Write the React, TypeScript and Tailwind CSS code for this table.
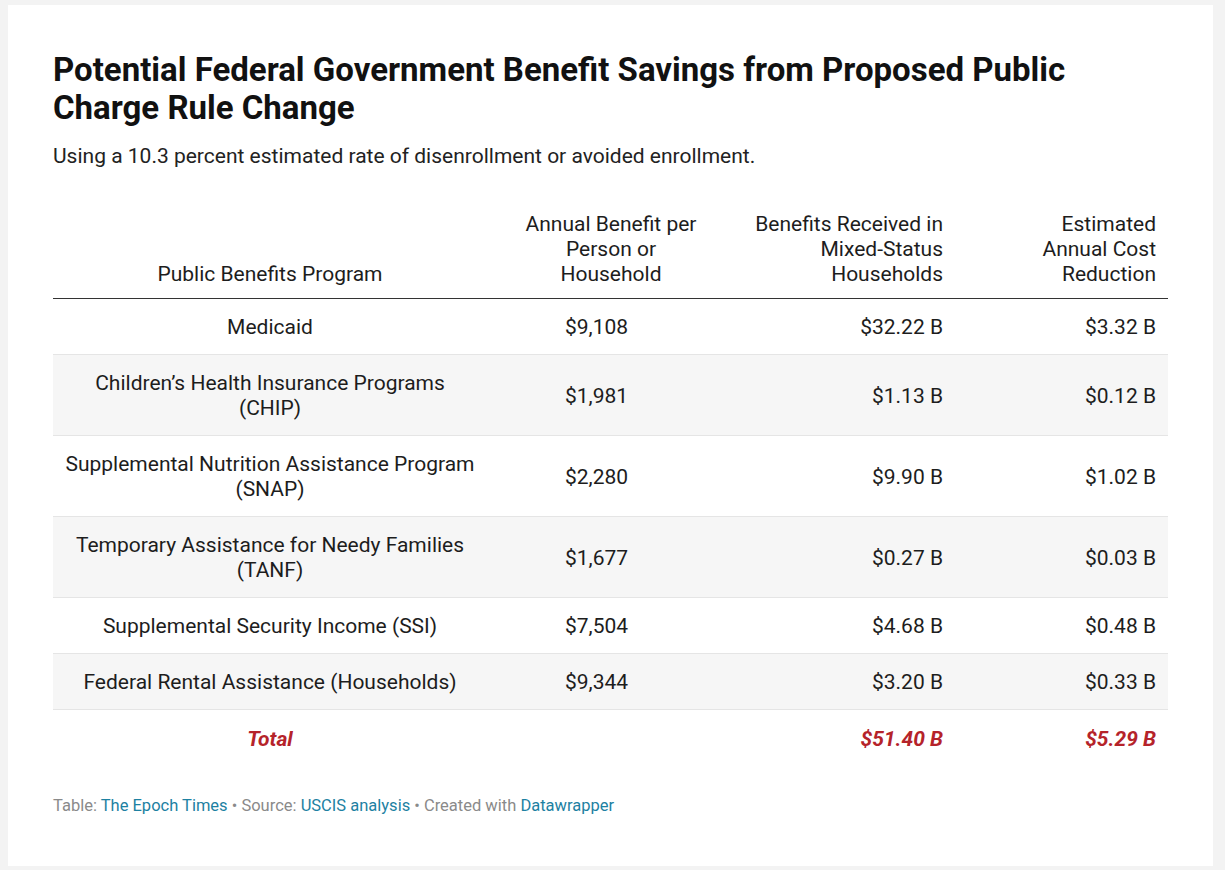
import React from "react";

type Row = { name: React.ReactNode; a: string; b: string; c: string; h: string };

const rows: Row[] = [
  { name: "Medicaid", a: "$9,108", b: "$32.22 B", c: "$3.32 B", h: "h-[56px]" },
  {
    name: (
      <>
        Children’s Health Insurance Programs
        <br />
        (CHIP)
      </>
    ),
    a: "$1,981",
    b: "$1.13 B",
    c: "$0.12 B",
    h: "h-[81px]",
  },
  {
    name: (
      <>
        Supplemental Nutrition Assistance Program
        <br />
        (SNAP)
      </>
    ),
    a: "$2,280",
    b: "$9.90 B",
    c: "$1.02 B",
    h: "h-[81px]",
  },
  {
    name: (
      <>
        Temporary Assistance for Needy Families
        <br />
        (TANF)
      </>
    ),
    a: "$1,677",
    b: "$0.27 B",
    c: "$0.03 B",
    h: "h-[81px]",
  },
  { name: "Supplemental Security Income (SSI)", a: "$7,504", b: "$4.68 B", c: "$0.48 B", h: "h-[56px]" },
  { name: "Federal Rental Assistance (Households)", a: "$9,344", b: "$3.20 B", c: "$0.33 B", h: "h-[56px]" },
];

export default function App() {
  return (
    <div className="w-[1225px] h-[870px] bg-[#f3f3f3] pt-[5px] pl-[8px] font-['Roboto',sans-serif]">
      <div className="w-[1205px] h-[861px] bg-white pt-[46px] px-[45px] text-[#1d1d1d]">
        <h1 className="text-[33px] leading-[38px] font-bold text-[#111]">
          Potential Federal Government Benefit Savings from Proposed Public
          <br />
          Charge Rule Change
        </h1>
        <p className="mt-[17px] text-[21px] leading-[25px] text-[#222]">
          Using a 10.3 percent estimated rate of disenrollment or avoided enrollment.
        </p>

        <div className="mt-[43px] w-[1115px] text-[21px] leading-[25px]">
          <div className="grid grid-cols-[434px_248px_220px_213px] border-b border-[#333] pb-[11px]">
            <div className="flex items-end justify-center">Public Benefits Program</div>
            <div className="flex items-end justify-center text-center">
              Annual Benefit per
              <br />
              Person or
              <br />
              Household
            </div>
            <div className="flex items-end justify-end text-right pr-[12px]">
              Benefits Received in
              <br />
              Mixed-Status
              <br />
              Households
            </div>
            <div className="flex items-end justify-end text-right pr-[12px]">
              Estimated
              <br />
              Annual Cost
              <br />
              Reduction
            </div>
          </div>

          {rows.map((r, i) => (
            <div
              key={i}
              className={`grid grid-cols-[434px_248px_220px_213px] border-b border-[#e5e5e5] pt-[2px] ${r.h} ${
                i % 2 === 1 ? "bg-[#f6f6f6]" : "bg-white"
              }`}
            >
              <div className="flex items-center justify-center text-center">{r.name}</div>
              <div className="flex items-center pl-[78px]">{r.a}</div>
              <div className="flex items-center justify-end pr-[12px]">{r.b}</div>
              <div className="flex items-center justify-end pr-[12px]">{r.c}</div>
            </div>
          ))}

          <div className="grid grid-cols-[434px_248px_220px_213px] h-[57px] pt-[2px] font-bold italic text-[#b5232a]">
            <div className="flex items-center justify-center">Total</div>
            <div />
            <div className="flex items-center justify-end pr-[12px]">$51.40 B</div>
            <div className="flex items-center justify-end pr-[12px]">$5.29 B</div>
          </div>
        </div>

        <p className="mt-[29px] text-[16.5px] leading-[20px] text-[#8a8a8a]">
          Table: <span className="text-[#1d81a2]">The Epoch Times</span> • Source:{" "}
          <span className="text-[#1d81a2]">USCIS analysis</span> • Created with{" "}
          <span className="text-[#1d81a2]">Datawrapper</span>
        </p>
      </div>
    </div>
  );
}
